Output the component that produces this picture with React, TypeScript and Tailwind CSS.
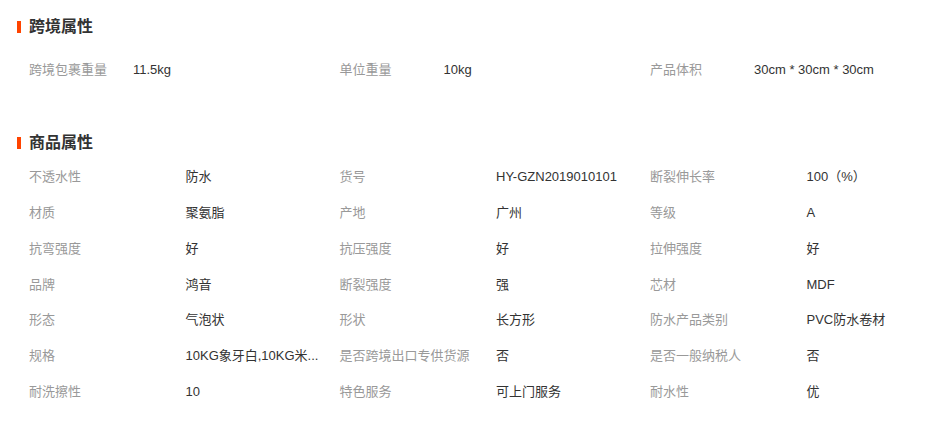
import React from "react";

const font = {
  fontFamily: "Tahoma, 'Liberation Sans', 'Noto Sans CJK SC', sans-serif",
};

const cross: [string, string][] = [
  ["跨境包裹重量", "11.5kg"],
  ["单位重量", "10kg"],
  ["产品体积", "30cm * 30cm * 30cm"],
];

const attrs: [string, string][] = [
  ["不透水性", "防水"],
  ["货号", "HY-GZN2019010101"],
  ["断裂伸长率", "100（%）"],
  ["材质", "聚氨脂"],
  ["产地", "广州"],
  ["等级", "A"],
  ["抗弯强度", "好"],
  ["抗压强度", "好"],
  ["拉伸强度", "好"],
  ["品牌", "鸿音"],
  ["断裂强度", "强"],
  ["芯材", "MDF"],
  ["形态", "气泡状"],
  ["形状", "长方形"],
  ["防水产品类别", "PVC防水卷材"],
  ["规格", "10KG象牙白,10KG米..."],
  ["是否跨境出口专供货源", "否"],
  ["是否一般纳税人", "否"],
  ["耐洗擦性", "10"],
  ["特色服务", "可上门服务"],
  ["耐水性", "优"],
];

function Title({ text }: { text: string }) {
  return (
    <div className="flex items-center h-[20px] pl-[17px]">
      <span className="w-[4px] h-[12px] bg-[#ff4400]" />
      <span className="ml-[8px] text-[16px] font-bold text-[#333]">{text}</span>
    </div>
  );
}

export default function App() {
  return (
    <div className="w-[939px] h-[422px] overflow-hidden bg-white" style={font}>
      <div className="pt-[17px]">
        <Title text="跨境属性" />
        <div className="mt-[15px] pl-[29px] flex w-[960px]">
          {cross.map(([k, v]) => (
            <div key={k} className="w-[310.5px] shrink-0 h-[36px] flex items-center text-[13px]">
              <span className="w-[104px] shrink-0 text-[#999]">{k}</span>
              <span className="text-[#333]">{v}</span>
            </div>
          ))}
        </div>
        <div className="mt-[45px]">
          <Title text="商品属性" />
        </div>
        <div className="mt-[6px] pl-[29px] w-[960px] grid grid-cols-[310.5px_310.5px_310.5px]">
          {attrs.map(([k, v], i) => (
            <div key={i} className="h-[35.8px] flex items-center text-[13px]">
              <span className="w-[156.5px] shrink-0 text-[#999] whitespace-nowrap">{k}</span>
              <span className="text-[#333] whitespace-nowrap">{v}</span>
            </div>
          ))}
        </div>
      </div>
    </div>
  );
}
